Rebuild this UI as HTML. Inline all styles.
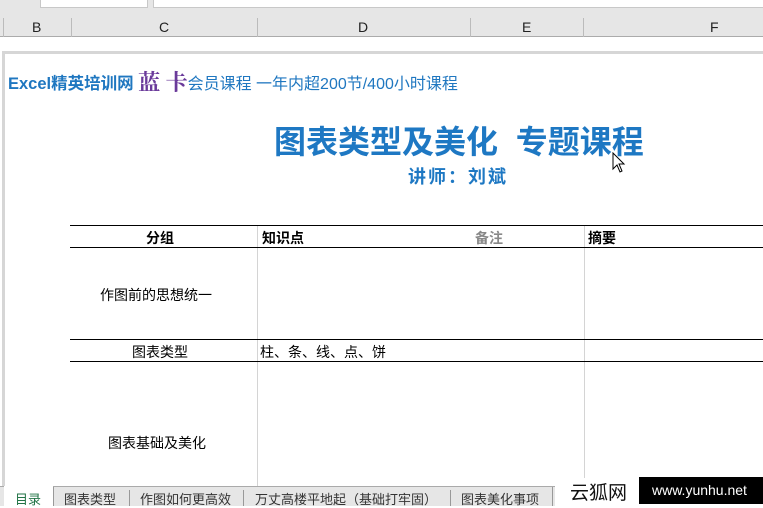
<!DOCTYPE html>
<html><head><meta charset="utf-8"><style>
*{margin:0;padding:0;box-sizing:border-box}
body{width:763px;height:506px;overflow:hidden;background:#fff;position:relative;font-family:"Liberation Sans","Noto Sans CJK SC",sans-serif}
.a{position:absolute}
.hl{position:absolute;height:1px;background:#000}
.vl{position:absolute;width:1px;background:#d4d4d4}
.t{position:absolute;font-size:14px;color:#000;white-space:nowrap}
</style></head><body>
<div class="a" style="left:0;top:0;width:763px;height:9px;background:#e6e6e6"></div>
<div class="a" style="left:40px;top:0;width:108px;height:8px;background:#fff;border:1px solid #c8c8c8;border-top:none"></div>
<div class="a" style="left:153px;top:0;width:610px;height:8px;background:#fff;border-left:1px solid #c8c8c8;border-bottom:1px solid #c8c8c8"></div>
<div class="a" style="left:0;top:9px;width:763px;height:28px;background:#e6e6e6;border-bottom:1px solid #ababab"></div>
<div class="a" style="left:0;top:19px;width:763px;height:18px;font-size:14px;color:#222">
<span class="a" style="left:32px;top:0">B</span>
<span class="a" style="left:159px;top:0">C</span>
<span class="a" style="left:358px;top:0">D</span>
<span class="a" style="left:522px;top:0">E</span>
<span class="a" style="left:710px;top:0">F</span>
</div>
<div class="vl" style="left:3px;top:18px;height:19px;background:#bbb"></div>
<div class="vl" style="left:71px;top:18px;height:19px;background:#bbb"></div>
<div class="vl" style="left:257px;top:18px;height:19px;background:#bbb"></div>
<div class="vl" style="left:470px;top:18px;height:19px;background:#bbb"></div>
<div class="vl" style="left:583px;top:18px;height:19px;background:#bbb"></div>
<div class="a" style="left:2px;top:51px;width:763px;height:440px;border-left:3px solid #d6d6d6;border-top:3px solid #d6d6d6"></div>
<div class="a" style="left:8px;top:65px;font-size:16px;color:#1f77c0;white-space:nowrap"><b style="font-size:16.5px">Excel精英培训网</b> <span style="font-family:'Noto Serif CJK SC',serif;font-size:22px;color:#6a3a9a;font-weight:bold;position:relative;top:1px">蓝 卡</span><span style="font-size:16px">会员课程 一年内超200节/400小时课程</span></div>
<div class="a" style="left:274px;top:117px;font-size:32px;font-weight:bold;color:#1e78c3;white-space:nowrap">图表类型及美化&nbsp; 专题课程</div>
<div class="a" style="left:408px;top:163px;font-size:18px;font-weight:bold;color:#1e78c3;white-space:nowrap;letter-spacing:2px">讲师：刘斌</div>
<svg class="a" style="left:612px;top:152px" width="16" height="24" viewBox="0 0 16 24"><path d="M1 1 L1 17 L5 13 L8 20 L10 19 L7 12 L12 12 Z" fill="#fff" stroke="#000" stroke-width="1"/></svg>
<div class="vl" style="left:257px;top:226px;height:270px"></div>
<div class="vl" style="left:584px;top:226px;height:270px"></div>
<div class="hl" style="left:70px;top:225px;width:693px"></div>
<div class="hl" style="left:70px;top:247px;width:693px"></div>
<div class="hl" style="left:70px;top:339px;width:693px"></div>
<div class="hl" style="left:70px;top:361px;width:693px"></div>
<div class="t" style="left:146px;top:228px;font-weight:bold">分组</div>
<div class="t" style="left:262px;top:228px;font-weight:bold">知识点</div>
<div class="t" style="left:475px;top:228px;font-weight:bold;color:#888">备注</div>
<div class="t" style="left:588px;top:228px;font-weight:bold">摘要</div>
<div class="t" style="left:100px;top:285px">作图前的思想统一</div>
<div class="t" style="left:132px;top:342px">图表类型</div>
<div class="t" style="left:260px;top:342px">柱、条、线、点、饼</div>
<div class="t" style="left:108px;top:433px">图表基础及美化</div>
<div class="a" style="left:0;top:486px;width:555px;height:20px;background:#e6e6e6;border-top:1px solid #aaa"></div>
<div class="a" style="left:4px;top:486px;width:49px;height:20px;background:#fff"></div>
<div class="a" style="left:0;top:489px;height:17px;font-size:13px;color:#333;white-space:nowrap">
<span class="a" style="left:15px;color:#217346">目录</span>
<span class="a" style="left:64px">图表类型</span>
<span class="a" style="left:140px">作图如何更高效</span>
<span class="a" style="left:255px">万丈高楼平地起（基础打牢固）</span>
<span class="a" style="left:461px">图表美化事项</span>
</div>
<div class="vl" style="left:53px;top:487px;height:19px;background:#999"></div>
<div class="vl" style="left:129px;top:490px;height:16px;background:#999"></div>
<div class="vl" style="left:243px;top:490px;height:16px;background:#999"></div>
<div class="vl" style="left:450px;top:490px;height:16px;background:#999"></div>
<div class="vl" style="left:552px;top:487px;height:19px;background:#999"></div>
<div class="a" style="left:563px;top:478px;width:76px;height:28px;background:#fff;font-size:19px;color:#111;padding-left:7px">云狐网</div>
<div class="a" style="left:639px;top:477px;width:124px;height:27px;background:#000;color:#fff;font-size:14px;padding:5px 0 0 13px">www.yunhu.net</div>
</body></html>
